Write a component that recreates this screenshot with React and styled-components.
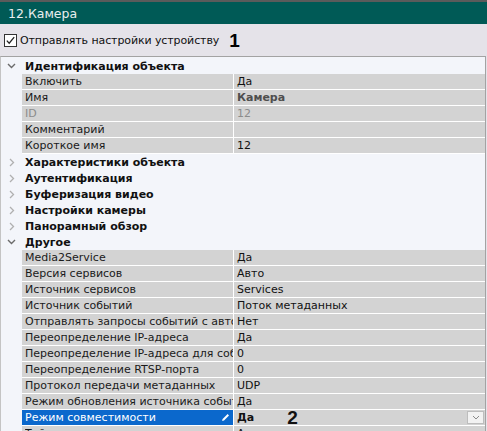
import styled, { createGlobalStyle } from "styled-components";

const GlobalStyle = createGlobalStyle`
    html, body {
        margin: 0;
        padding: 0;
        background: #e5e3e9;
        overflow: hidden;
    }
    body {
        font-family: "DejaVu Sans", Verdana, sans-serif;
        font-size: 11px;
        color: #000;
    }
`;

const Page = styled.div`
    width: 487px;
    height: 431px;
    overflow: hidden;
    border-top: 2px solid #5b5b5b;
    box-sizing: border-box;
`;

const Header = styled.div`
    height: 22px;
    background: #005a56;
    color: #e9eeee;
    font-size: 12.5px;
    display: flex;
    align-items: center;
    padding-left: 8px;
`;

const Toolbar = styled.div`
    height: 32px;
    display: flex;
    align-items: center;
    padding-left: 4px;
    background: #e5e3e9;
`;

const CheckLabel = styled.span`
    margin-left: 3px;
    color: #111;
    letter-spacing: -0.1px;
`;

const Marker = styled.span`
    font-family: "Liberation Sans", Arial, sans-serif;
    font-weight: 700;
    font-size: 19px;
    margin-left: ${(p) => p.$gap || 10}px;
    line-height: 1;
`;

const Grid = styled.div`
    width: 486px;
    box-sizing: border-box;
    background: #f3f5fa;
    border-top: 1px solid #a3a3a3;
    border-left: 1px solid #c4c4c4;
    border-right: 1px solid #a3a3a3;
    padding-top: 1px;
`;

const GroupRow = styled.div`
    height: 16px;
    display: flex;
    align-items: center;
    font-weight: 700;
    color: #111;
`;

const Gutter = styled.div`
    width: 21px;
    height: 100%;
    flex-shrink: 0;
    display: flex;
    align-items: center;
    justify-content: center;
`;

const GroupTitle = styled.span`
    padding-left: 3px;
`;

const Row = styled.div`
    height: 16px;
    display: flex;
`;

const Cells = styled.div`
    flex: 1;
    display: flex;
    background: #d3d3d3;
    border-bottom: 1px solid #fff;
`;

const LabelCell = styled.div`
    width: 212px;
    flex-shrink: 0;
    padding-left: 3px;
    box-sizing: border-box;
    white-space: nowrap;
    overflow: hidden;
    display: flex;
    align-items: center;
    border-right: 1px solid #fff;
    background: ${(p) => (p.$selected ? "#0b68cc" : "transparent")};
    color: ${(p) => (p.$selected ? "#fff" : p.$muted ? "#8c8c8c" : "#1a1a1a")};
`;

const LabelText = styled.span`
    flex: 1;
    min-width: 0;
    overflow: hidden;
`;

const ValueCell = styled.div`
    flex: 1;
    padding-left: 3px;
    display: flex;
    align-items: center;
    white-space: nowrap;
    color: ${(p) => p.$color || "#111"};
    font-weight: ${(p) => (p.$bold ? 700 : 400)};
`;

const DropButton = styled.div`
    margin-left: auto;
    margin-right: 1px;
    width: 17px;
    height: 13px;
    background: #f2f2f2;
    border: 1px solid #bdbdbd;
    box-sizing: border-box;
    display: flex;
    align-items: center;
    justify-content: center;
`;

const Chevron = ({ open }) =>
    open ? (
        <svg width="9" height="6" viewBox="0 0 9 6">
            <path d="M1 1 L4.5 4.5 L8 1" fill="none" stroke="#6b6b6b" strokeWidth="1.4" />
        </svg>
    ) : (
        <svg width="6" height="9" viewBox="0 0 6 9">
            <path d="M1 1 L4.5 4.5 L1 8" fill="none" stroke="#b0b0b0" strokeWidth="1.3" />
        </svg>
    );

const CheckBox = () => (
    <svg width="13" height="13" viewBox="0 0 13 13">
        <rect x="0.5" y="0.5" width="12" height="12" fill="#fff" stroke="#333" />
        <path d="M2.8 6.6 L5.2 9.2 L10.2 3.2" fill="none" stroke="#222" strokeWidth="1.3" />
    </svg>
);

const Pencil = () => (
    <svg width="9" height="9" viewBox="0 0 9 9" style={{ marginRight: 3, flexShrink: 0 }}>
        <path d="M1 8 L1.6 6 L6.6 1 L8 2.4 L3 7.4 Z" fill="#fff" />
        <path d="M1 8 L1.6 6 L3 7.4 Z" fill="#9cc3ee" />
    </svg>
);

const SmallDown = () => (
    <svg width="8" height="5" viewBox="0 0 8 5">
        <path d="M1 1 L4 4 L7 1" fill="none" stroke="#8a8a8a" strokeWidth="1" />
    </svg>
);

const groups = [
    {
        title: "Идентификация объекта",
        open: true,
        rows: [
            { label: "Включить", value: "Да" },
            { label: "Имя", value: "Камера", color: "#4e4e4e", bold: true },
            { label: "ID", value: "12", color: "#8c8c8c", muted: true },
            { label: "Комментарий", value: "" },
            { label: "Короткое имя", value: "12" },
        ],
    },
    { title: "Характеристики объекта" },
    { title: "Аутентификация" },
    { title: "Буферизация видео" },
    { title: "Настройки камеры" },
    { title: "Панорамный обзор" },
    {
        title: "Другое",
        open: true,
        rows: [
            { label: "Media2Service", value: "Да" },
            { label: "Версия сервисов", value: "Авто" },
            { label: "Источник сервисов", value: "Services" },
            { label: "Источник событий", value: "Поток метаданных" },
            { label: "Отправлять запросы событий с автоматическим", value: "Нет" },
            { label: "Переопределение IP-адреса", value: "Да" },
            { label: "Переопределение IP-адреса для событий", value: "0" },
            { label: "Переопределение RTSP-порта", value: "0" },
            { label: "Протокол передачи метаданных", value: "UDP" },
            { label: "Режим обновления источника событий", value: "Да" },
            { label: "Режим совместимости", value: "Да", selected: true },
            { label: "Тайм-аут", value: "Авто" },
        ],
    },
];

function PropRow({ row }) {
    return (
        <Row>
            <Gutter />
            <Cells>
                <LabelCell $selected={row.selected} $muted={row.muted}>
                    <LabelText>{row.label}</LabelText>
                    {row.selected && <Pencil />}
                </LabelCell>
                <ValueCell $color={row.color} $bold={row.bold || row.selected}>
                    {row.value}
                    {row.selected && (
                        <>
                            <Marker $gap={33}>2</Marker>
                            <DropButton>
                                <SmallDown />
                            </DropButton>
                        </>
                    )}
                </ValueCell>
            </Cells>
        </Row>
    );
}

export default function App() {
    return (
        <Page>
            <GlobalStyle />
            <Header>12.Камера</Header>
            <Toolbar>
                <CheckBox />
                <CheckLabel>Отправлять настройки устройству</CheckLabel>
                <Marker>1</Marker>
            </Toolbar>
            <Grid>
                {groups.map((g) => (
                    <div key={g.title}>
                        <GroupRow>
                            <Gutter>
                                <Chevron open={g.open} />
                            </Gutter>
                            <GroupTitle>{g.title}</GroupTitle>
                        </GroupRow>
                        {g.open && g.rows.map((r) => <PropRow key={r.label} row={r} />)}
                    </div>
                ))}
            </Grid>
        </Page>
    );
}
